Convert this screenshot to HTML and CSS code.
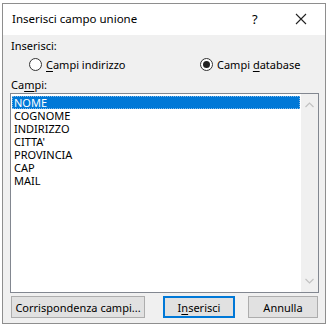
FILE: index.html
```html
<!DOCTYPE html>
<html lang="it">
<head>
    <meta charset="UTF-8">
    <title>Inserisci campo unione</title>
    <link rel="stylesheet" href="styles.css">
</head>
<body>
    <div class="window">
        <!-- Title bar -->
        <div class="titlebar">
            <span class="title">Inserisci campo unione</span>
            <span class="help">?</span>
            <span class="close">
                <svg width="12" height="12" viewBox="0 0 12 12">
                    <path d="M1 1 L11 11 M11 1 L1 11" stroke="#222" stroke-width="1.1" fill="none"/>
                </svg>
            </span>
        </div>

        <div class="content">
            <div class="label">Inserisci:</div>
            <div class="radios">
                <label class="radio">
                    <span class="circle"></span>
                    <span><u>C</u>ampi indirizzo</span>
                </label>
                <label class="radio">
                    <span class="circle checked"></span>
                    <span>Campi <u>d</u>atabase</span>
                </label>
            </div>

            <div class="label fields-label">Ca<u>m</u>pi:</div>
            <div class="listbox">
                <ul class="items">
                    <li class="selected">NOME</li>
                    <li>COGNOME</li>
                    <li>INDIRIZZO</li>
                    <li>CITTA'</li>
                    <li>PROVINCIA</li>
                    <li>CAP</li>
                    <li>MAIL</li>
                </ul>
                <div class="scrollbar">
                    <svg width="9" height="6" viewBox="0 0 9 6"><path d="M0.5 5 L4.5 1 L8.5 5" stroke="#c2c2c2" stroke-width="1.2" fill="none"/></svg>
                    <svg width="9" height="6" viewBox="0 0 9 6"><path d="M0.5 1 L4.5 5 L8.5 1" stroke="#c2c2c2" stroke-width="1.2" fill="none"/></svg>
                </div>
            </div>

            <div class="buttons">
                <button class="btn btn-match">Corrispondenza campi...</button>
                <button class="btn btn-default">I<u>n</u>serisci</button>
                <button class="btn btn-cancel">Annulla</button>
            </div>
        </div>
    </div>
</body>
</html>
```

FILE: styles.css
```css
/* General reset */
* {
    margin: 0;
    padding: 0;
    box-sizing: border-box;
}

body {
    background-color: #fff;
    font-family: "Noto Sans", "Open Sans", sans-serif;
    font-size: 11px;
    color: #000;
}

u {
    text-decoration-thickness: 1px;
    text-underline-offset: 2px;
}

/* Dialog window */
.window {
    margin: 3px 0 0 2px;
    width: 324px;
    height: 321px;
    border: 1px solid #8e8e8e;
    background-color: #f0f0f0;
    display: flex;
    flex-direction: column;
}

.titlebar {
    height: 31px;
    flex-shrink: 0;
    background-color: #fff;
    display: flex;
    align-items: center;
    padding: 0 0 2px 9px;
}

.title {
    flex: 1;
    font-size: 11.5px;
}

.help {
    width: 43px;
    font-size: 13px;
}

.close {
    width: 30px;
    display: flex;
    align-items: center;
}

.content {
    padding: 3px 0 0 7px;
    display: flex;
    flex-direction: column;
}

.label {
    height: 16px;
    line-height: 16px;
    padding-left: 1px;
}

/* Radio buttons */
.radios {
    display: flex;
    align-items: center;
    margin-top: 1px;
    padding-left: 19px;
    height: 18px;
}

.radio {
    display: flex;
    align-items: center;
    gap: 4px;
}

.radio:first-child {
    width: 171px;
}

.circle {
    width: 13px;
    height: 13px;
    border: 1px solid #333;
    border-radius: 50%;
    background-color: #fff;
    display: flex;
    align-items: center;
    justify-content: center;
}

.circle.checked::after {
    content: "";
    width: 7px;
    height: 7px;
    border-radius: 50%;
    background-color: #222;
}

.fields-label {
    margin-top: 4px;
}

/* List box */
.listbox {
    width: 309px;
    height: 200px;
    border: 1px solid #828790;
    background-color: #fff;
    display: flex;
}

.items {
    list-style: none;
    flex: 1;
    padding: 2px 1px;
}

.items li {
    height: 13px;
    line-height: 13px;
    padding-left: 2px;
}

.items li.selected {
    background-color: #0078d7;
    color: #fff;
    outline: 1px dotted #7fb8e8;
    outline-offset: -1px;
}

.scrollbar {
    width: 17px;
    background-color: #f0f0f0;
    display: flex;
    flex-direction: column;
    justify-content: space-between;
    align-items: center;
    padding: 8px 0;
}

/* Buttons */
.buttons {
    display: flex;
    margin-top: 3px;
    padding-left: 1px;
}

.btn {
    height: 22px;
    padding: 0;
    white-space: nowrap;
    font-family: "Noto Sans", "Open Sans", sans-serif;
    font-size: 11px;
    color: #000;
    background-color: #e1e1e1;
    border: 1px solid #adadad;
}

.btn-match {
    width: 134px;
}

.btn-default {
    width: 72px;
    margin-left: 18px;
    border: 2px solid #0078d7;
}

.btn-cancel {
    width: 70px;
    margin-left: 13px;
}
```
